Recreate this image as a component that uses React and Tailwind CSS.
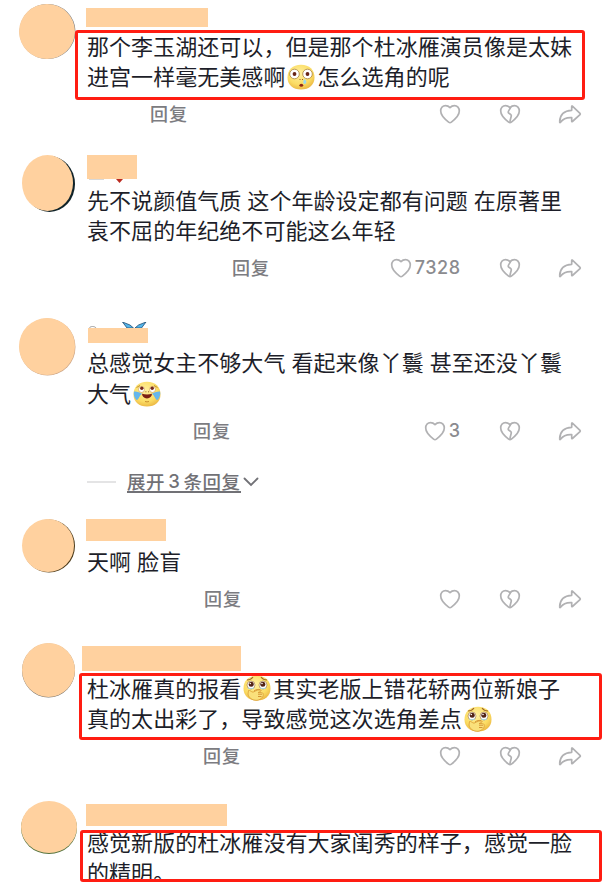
import React from "react";

function Heart({ broken }) {
  return (
    <svg className="block h-5 w-[22px] shrink-0" viewBox="0 0 22 20" fill="none" stroke="#b1b1b3" strokeWidth="1.7" strokeLinejoin="round" strokeLinecap="round">
      <path d="M11 3.600C9.800 2.300 8.300 1.600 6.600 1.600C3.700 1.600 1.700 3.900 1.700 7.100C1.700 11.200 5.200 14.800 9.600 18.100C10.500 18.700 11.500 18.700 12.400 18.100C16.800 14.800 20.300 11.200 20.300 7.100C20.300 3.900 18.300 1.600 15.400 1.600C13.700 1.600 12.200 2.300 11 3.600Z" />
      {broken && <path d="M11.500 3.600C10.600 5.500 9.200 7 9.200 8.200C9.200 9.500 12.300 10.200 12.300 11.600C12.300 13.500 11 15.500 11 18" />}
    </svg>
  );
}

function Share() {
  return (
    <svg className="block h-5 w-6 shrink-0" viewBox="0 0 24 20" fill="none" stroke="#b1b1b3" strokeWidth="1.7" strokeLinejoin="round">
      <path d="M13.700 2.400Q13.700 1.600 14.400 2.200L22 9.300Q22.600 10 22 10.700L14.400 17.500Q13.700 18 13.700 17.200V13.600C8.800 13.300 5.300 14.400 2.500 18.300C1.700 19 1.600 18.200 1.700 17.400C2 10.500 6 6.600 13.700 6.300Z" />
    </svg>
  );
}

function FaceShape() {
  return (
    <>
      <defs>
        <radialGradient id="face" cx="0.45" cy="0.35" r="0.7">
          <stop offset="0" stopColor="#fff0a0" />
          <stop offset="0.65" stopColor="#fbdc63" />
          <stop offset="1" stopColor="#e9b23f" />
        </radialGradient>
      </defs>
      <path d="M14 .8C22.500 .8 27.500 6 27.500 13.500C27.500 21 22 25.500 14 25.500C6 25.500 .5 21 .5 13.500C.5 6 5.500 .8 14 .8Z" fill="url(#face)" />
    </>
  );
}

function Emoji({ kind }) {
  return (
    <svg className="mx-[2px] mt-0.5 block h-[26px] w-7 shrink-0" viewBox="0 0 28 26" fill="none">
      <FaceShape />
      {kind === "stare" && (
        <>
          <circle cx="7.500" cy="10" r="4.800" fill="#fff" stroke="#a9823c" strokeWidth=".8" />
          <circle cx="20.500" cy="10" r="4.800" fill="#fff" stroke="#a9823c" strokeWidth=".8" />
          <circle cx="7.500" cy="10" r="1.900" fill="#682416" />
          <circle cx="20.500" cy="10" r="1.900" fill="#682416" />
          <path d="M12.500 15.500h1M15 15.500h1" stroke="#a35c1e" />
          <ellipse cx="14.300" cy="21.300" rx="1.900" ry="1.500" fill="#922816" />
          <path d="M17.200 15c2 1 2.800 2.800 1.600 4.500c-1.500 1.200-3 0-2.500-2z" fill="#9bdaf0" />
        </>
      )}
      {kind === "laugh" && (
        <>
          <path d="M1 10.500C4 10.300 7 11.200 9.300 13C6.500 13.200 6.300 18.700 3.500 19C1.300 17 .2 13 1 10.500ZM27 10.500C24 10.300 21 11.200 18.700 13C21.500 13.200 21.700 18.700 24.500 19C26.700 17 27.800 13 27 10.500Z" fill="#65b6ec" />
          <path d="M3.500 6.500L7 4.500M24.500 6.500L21 4.500" stroke="#c59132" />
          <circle cx="8.500" cy="8.500" r="3" fill="#fff" stroke="#c9954c" strokeWidth=".6" />
          <circle cx="19.500" cy="8.500" r="3" fill="#fff" stroke="#c9954c" strokeWidth=".6" />
          <circle cx="8.800" cy="7.300" r="1.700" fill="#762a1d" />
          <circle cx="19.200" cy="7.300" r="1.700" fill="#762a1d" />
          <path d="M12.500 10.800h.8M15 10.800h.8" stroke="#7a4216" />
          <path d="M9 12.800C12 13.800 16 13.800 19 12.800C18.800 15.600 17 17.400 14 17.400C11 17.400 9.200 15.600 9 12.800Z" fill="#7c2013" />
          <path d="M12 20.500q2 .8 4 0" stroke="#c98d2e" />
        </>
      )}
      {kind === "cry" && (
        <>
          <path d="M4 5C6.500 5 8.500 4 10 2M24 5C21.500 5 19.500 4 18 2" stroke="#9d6626" strokeWidth="1.100" />
          <circle cx="8" cy="10" r="4" fill="#fff" stroke="#9c7038" strokeWidth=".6" />
          <circle cx="20" cy="10" r="4" fill="#fff" stroke="#9c7038" strokeWidth=".6" />
          <circle cx="8.200" cy="9.300" r="2.500" fill="#522316" />
          <circle cx="19.800" cy="9.300" r="2.500" fill="#522316" />
          <circle cx="7.300" cy="8.500" r=".8" fill="#fff" />
          <circle cx="19" cy="8.500" r=".8" fill="#fff" />
          <path d="M5 13q3 1.800 6 0M17 13q3 1.800 6 0" stroke="#a8d6de" />
          <path d="M5.500 15.500C7 15 8 16.800 10 17.200C13 15.500 16 14.500 18.200 15C18.800 16.200 16 17 15 17.600C18.500 17.200 20.500 17.800 20 19C21 20.500 19 24.500 14 25.300C9 25.500 5.500 22.500 5 19Z" fill="#fae07b" stroke="#d99c35" strokeWidth=".8" />
          <path d="M11 16c2-1.600 4.500-1.900 6-1.200M15 19.200h4M15 21.500h3.500" stroke="#cf8b2c" strokeWidth=".9" />
        </>
      )}
    </svg>
  );
}

function Line({ className, children }) {
  return <div className={`flex shrink-0 items-center whitespace-pre pb-1 ${className}`}>{children}</div>;
}

function Actions({ className, count }) {
  return (
    <div className={`flex h-5 shrink-0 items-center pr-[21.500px] text-[18px] font-medium text-[#7c7c81] ${className}`}>
      <span className="pb-[3px] leading-5 tracking-[1px]">回复</span>
      <div className="ml-auto flex items-center">
        <Heart />
        {count && <span className="ml-[3px] font-[Inter] leading-5 tracking-[0.500px] text-[#8b8b8f]">{count}</span>}
      </div>
      <div className="ml-[38px]"><Heart broken /></div>
      <div className="ml-[37px]"><Share /></div>
    </div>
  );
}

function Comment({ className, avatar, children }) {
  return (
    <section className={`relative flex shrink-0 ${className}`}>
      <div className="w-[87px] shrink-0">{avatar}</div>
      <div className="flex min-w-0 flex-1 flex-col">{children}</div>
    </section>
  );
}

const avatarBase = "rounded-[50%] bg-[#ffd19f]";
const bar = "shrink-0 bg-[#ffd19f]";
const frame = "absolute rounded-[3px] border-[3px] border-[#ff1d12]";

export default function App() {
  return (
    <main className="flex h-[891px] w-[603px] flex-col overflow-hidden bg-white font-['Noto_Sans_CJK_SC',sans-serif] text-[22px] tracking-[0.05px] text-[#1d1e29]">
      <Comment className="h-[150px]" avatar={<div className={`${avatarBase} ml-[19px] mt-1 h-[55px] w-14 shadow-[0.5px_0_0_0_#6d7680]`} />}>
        <div className={`${bar} -ml-px mt-2 h-[19px] w-[122px]`} />
        <Line className="mt-[5px] h-[30px]">那个李玉湖还可以，但是那个杜冰雁演员像是太妹</Line>
        <Line className="h-[31px]">进宫一样毫无美感啊<Emoji kind="stare" />怎么选角的呢</Line>
        <Actions className="mt-[11px] pl-[63px]" />
        <div className={`${frame} left-[75px] top-[30px] h-[70px] w-[510px]`} />
      </Comment>

      <Comment className="h-[160px]" avatar={<div className={`${avatarBase} ml-[22px] mt-[5px] h-[56px] w-[51px] shadow-[2px_1px_0_0_#102329]`} />}>
        <div className={`${bar} mt-[5px] h-6 w-[50px]`} />
        <svg className="block h-1 w-10 shrink-0" viewBox="0 0 40 4">
          <path d="M2 .5h15" stroke="#d8d8d8" />
          <path d="M29 0h7l-3.500 4z" fill="#bb2b20" />
        </svg>
        <Line className="mt-1 h-[29px] [word-spacing:1px]">先不说颜值气质 这个年龄设定都有问题 在原著里</Line>
        <Line className="h-[30px]">袁不屈的年纪绝不可能这么年轻</Line>
        <Actions className="mt-3 pl-[145px]" count="7328" />
      </Comment>

      <Comment className="h-[200px]" avatar={<div className={`${avatarBase} ml-[19px] mt-2 h-[57px] w-14 shadow-[0.5px_0.5px_0_0_#cda789]`} />}>
        <svg className="mt-3 block h-1.5 w-[62px] shrink-0" viewBox="0 0 62 6">
          <path d="M2.500 6C3 4 8 4 9 6" stroke="#999" fill="none" />
          <path d="M35.500 0L43 3L46.500 6H40ZM59 0L51.500 3L48 6H54.500Z" fill="#54b6eb" stroke="#204b72" strokeWidth=".8" />
        </svg>
        <div className={`${bar} ml-[0.500px] h-[15px] w-[60px]`} />
        <Line className="mt-[6px] h-[29px] [word-spacing:1px]">总感觉女主不够大气 看起来像丫鬟 甚至还没丫鬟</Line>
        <Line className="mt-[1px] h-[31px]">大气<Emoji kind="laugh" /></Line>
        <Actions className="mt-[11px] pl-[106px]" count="3" />
        <div className="mt-[28px] flex h-[26px] shrink-0 items-center text-[18.500px] font-medium text-[#717176]">
          <div className="h-0.5 w-[29px] bg-[#e4e4e5]" />
          <div className="ml-[11px] flex h-[22px] items-center border-b-2 border-[#717176] pb-px leading-5 tracking-[0.600px]">
            展开<span className="mx-[3px] pt-px font-[Inter]">3</span>条回复
          </div>
          <svg className="ml-[2px] block h-3 w-4" viewBox="0 0 16 12" fill="none" stroke="#717176" strokeWidth="1.800" strokeLinecap="round">
            <path d="M1.500 2.500L8 9L14.500 2.500" />
          </svg>
        </div>
      </Comment>

      <Comment className="h-[125px]" avatar={<div className={`${avatarBase} ml-[22px] mt-[9px] h-[53px] w-[52px] shadow-[1px_0.5px_0_0_#4c3b1b]`} />}>
        <div className={`${bar} -ml-px mt-[9px] h-[22px] w-20`} />
        <Line className="mt-[6px] h-[30px] [word-spacing:1px]">天啊 脸盲</Line>
        <Actions className="mt-3 pl-[117px]" />
      </Comment>

      <Comment className="h-[155px]" avatar={<div className={`${avatarBase} ml-[22px] mt-2 h-[54px] w-[53px] shadow-[0_0.5px_0_0_#75716a]`} />}>
        <div className={`${bar} -ml-[5px] mt-[11px] h-[25px] w-[159px]`} />
        <Line className="mt-[3px] h-[30px]">杜冰雁真的报看<Emoji kind="cry" />其实老版上错花轿两位新娘子</Line>
        <Line className="h-[31px]">真的太出彩了，导致感觉这次选角差点<Emoji kind="cry" /></Line>
        <Actions className="mt-[11px] pl-[116px]" />
        <div className={`${frame} left-[79px] top-[38px] h-[67px] w-[523px]`} />
      </Comment>

      <Comment className="h-[92px] overflow-hidden" avatar={<div className={`${avatarBase} ml-[21px] mt-[11px] h-[52px] w-14 shadow-[0_1px_0_0_#55733d]`} />}>
        <div className={`${bar} -ml-px mt-[14px] h-[22px] w-[141px]`} />
        <Line className="mt-[3px] h-[29px]">感觉新版的杜冰雁没有大家闺秀的样子，感觉一脸</Line>
        <Line className="h-[30px]">的精明。</Line>
        <div className={`${frame} left-20 top-10 h-[52px] w-[522px]`} />
      </Comment>
    </main>
  );
}
